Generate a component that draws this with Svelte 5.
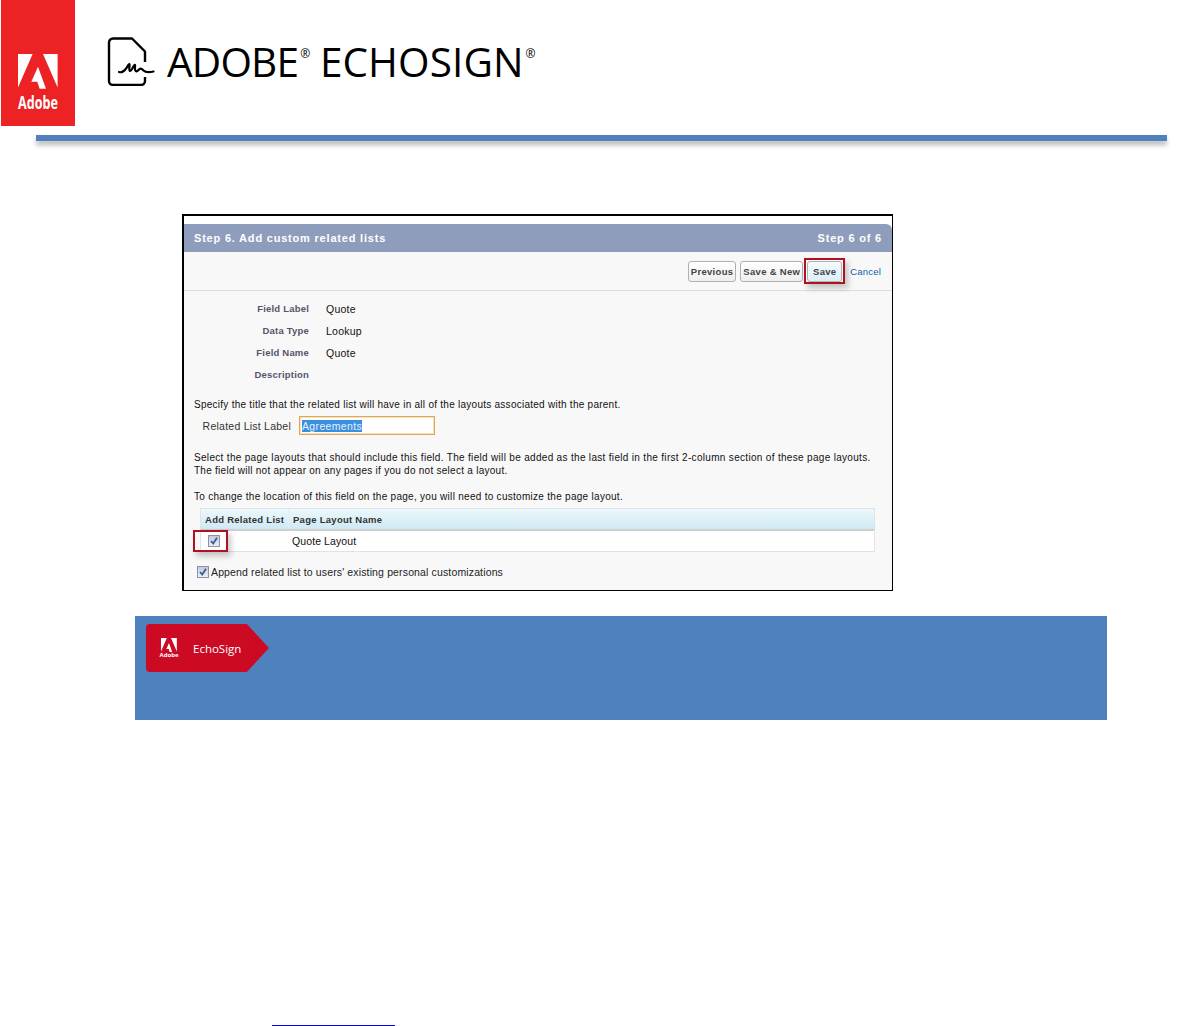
<script>
  const fields = [
    { label: 'Field Label', value: 'Quote' },
    { label: 'Data Type', value: 'Lookup' },
    { label: 'Field Name', value: 'Quote' },
    { label: 'Description', value: '' }
  ];
</script>

<div class="page">
  <header class="header">
    <div class="adobe">
      <svg class="adobe-a" viewBox="0 0 40 35" aria-hidden="true">
        <path d="M0 0H14.600L0 33.500Z M25 0H39.600V33.500Z M20 12.700L28 34.700H21.600L19.300 27.700H13.300Z" fill="#fff" />
      </svg>
      <span class="adobe-word">Adobe</span>
    </div>
    <svg class="doc" viewBox="0 0 48 50" aria-hidden="true">
      <path d="M38 26V15.500L25 2.500H6A4 4 0 0 0 2 6.500V45A4 4 0 0 0 6 49H34A4 4 0 0 0 38 45V41" fill="none" stroke="#000" stroke-width="2.400" stroke-linejoin="round" />
      <path d="M12 36C15 37 17 35.500 19.500 32C21.500 28.500 23 26.500 22.500 30C21.800 35 23 36.500 25 33C27 29 28.500 27 28 31C27.500 35.500 29.500 36.500 31.500 34C33 32 34.500 32 36.500 34.500C38.500 36.500 42 36.500 46.500 35.500" fill="none" stroke="#000" stroke-width="2.200" stroke-linecap="round" />
    </svg>
    <div class="wordmark">ADOBE<span class="reg">®</span> <span class="echo">ECHOSIGN</span><span class="reg">®</span></div>
  </header>

  <div class="rule"></div>

  <section class="shot">
    <div class="title">
      <span>Step 6. Add custom related lists</span>
      <span>Step 6 of 6</span>
    </div>
    <div class="panel">
      <div class="toolbar">
        <button class="btn">Previous</button>
        <button class="btn">Save &amp; New</button>
        <span class="save-wrap">
          <button class="btn save">Save</button>
          <span class="mark mark-save"></span>
        </span>
        <span class="cancel">Cancel</span>
      </div>

      <dl class="fields">
        {#each fields as f}
          <dt>{f.label}</dt>
          <dd>{f.value}</dd>
        {/each}
      </dl>

      <p class="p1">Specify the title that the related list will have in all of the layouts associated with the parent.</p>

      <div class="related">
        <span class="related-label">Related List Label</span>
        <span class="input"><span class="sel">Agreements</span></span>
      </div>

      <p class="p2"><span class="l1">Select the page layouts that should include this field. The field will be added as the last field in the first 2-column section of these page layouts.</span><br /><span class="l2">The field will not appear on any pages if you do not select a layout.</span></p>

      <p class="p3">To change the location of this field on the page, you will need to customize the page layout.</p>

      <div class="table">
        <div class="thead">
          <span class="c1">Add Related List</span>
          <span class="c2">Page Layout Name</span>
        </div>
        <div class="trow">
          <span class="c1 check-cell">
            <span class="check"><svg viewBox="0 0 10 10" aria-hidden="true"><path d="M2 5L4.200 7.500L8 1.800" fill="none" stroke="#3a5a9e" stroke-width="1.800" /></svg></span>
            <span class="mark mark-check"></span>
          </span>
          <span class="c2 rowname">Quote Layout</span>
        </div>
      </div>

      <div class="append">
        <span class="check"><svg viewBox="0 0 10 10" aria-hidden="true"><path d="M2 5L4.200 7.500L8 1.800" fill="none" stroke="#3a5a9e" stroke-width="1.800" /></svg></span>
        <span>Append related list to users' existing personal customizations</span>
      </div>
    </div>
  </section>

  <section class="banner">
    <div class="flag">
      <div class="flag-logo">
        <svg viewBox="0 0 40 35" aria-hidden="true">
          <path d="M0 0H14.600L0 33.500Z M25 0H39.600V33.500Z M20 12.700L28 34.700H21.600L19.300 27.700H13.300Z" fill="#fff" />
        </svg>
        <span>Adobe</span>
      </div>
      <span class="flag-name">EchoSign</span>
    </div>
  </section>

  <div class="footnote"></div>
</div>

<style>
  :global(body) {
    margin: 0;
    background: #fff;
  }
  .page {
    width: 1178px;
    height: 1026px;
    overflow: hidden;
    font-family: "Liberation Sans", Arial, sans-serif;
    position: relative;
  }
  .header {
    height: 126px;
    display: flex;
    align-items: flex-start;
  }
  .adobe {
    width: 74px;
    height: 126px;
    margin-left: 1px;
    background: #ed2224;
    display: flex;
    flex-direction: column;
    align-items: center;
    padding-top: 54px;
    box-sizing: border-box;
  }
  .adobe-a {
    width: 40px;
    height: 35px;
    display: block;
  }
  .adobe-word {
    margin-top: 5px;
    color: #fff;
    font: 700 17px/17px "Open Sans", sans-serif;
    transform: scaleX(0.74);
  }
  .doc {
    width: 48px;
    height: 50px;
    margin: 36px 0 0 32px;
    flex: none;
  }
  .wordmark {
    margin: 34px 0 0 12px;
    font: 400 40.500px/56px "Open Sans", sans-serif;
    color: #000;
    letter-spacing: -0.800px;
    white-space: nowrap;
  }
  .echo {
    letter-spacing: 0.100px;
  }
  .reg {
    font-size: 12px;
    vertical-align: 19px;
    line-height: 0;
    letter-spacing: 0;
    margin: 0 0 0 2px;
  }
  .rule {
    height: 6px;
    margin: 9px 11px 0 36px;
    background: #4f81bd;
    box-shadow: 0 4px 5px rgba(0, 0, 0, 0.28);
  }
  .shot {
    width: 711px;
    height: 377px;
    box-sizing: border-box;
    margin: 73px 0 0 182px;
    border: solid #000;
    border-width: 2px 1px 1px 2px;
    padding-top: 8px;
    background: #fff;
    display: flex;
    flex-direction: column;
  }
  .title {
    height: 28px;
    background: #8f9dbd;
    border-radius: 0 6px 0 0;
    color: #fff;
    font-size: 11px;
    font-weight: 700;
    letter-spacing: 0.800px;
    display: flex;
    align-items: center;
    justify-content: space-between;
    padding: 0 10px;
    flex: none;
  }
  .panel {
    flex: 1;
    background: #f8f8f8;
    font-size: 10px;
    color: #111;
    letter-spacing: 0.350px;
  }
  .toolbar {
    height: 39px;
    box-sizing: border-box;
    border-bottom: 1px solid #dcdcdc;
    display: flex;
    align-items: center;
    justify-content: flex-end;
    padding-right: 11px;
    gap: 4px;
  }
  .btn {
    height: 21px;
    box-sizing: border-box;
    margin: 0;
    padding: 0 2px;
    border: 1px solid #b0b0b0;
    border-radius: 3px;
    background: linear-gradient(#fff, #eee);
    font: 700 9.500px "Liberation Sans", sans-serif;
    letter-spacing: 0.300px;
    color: #444;
    white-space: nowrap;
  }
  .save-wrap {
    position: relative;
    display: flex;
    margin-right: 4px;
  }
  .save {
    width: 35px;
    background: linear-gradient(#f4faff, #dceefa);
  }
  .mark {
    position: absolute;
    border: 2px solid #b01020;
    box-shadow: 3px 4px 6px rgba(0, 0, 0, 0.22);
    box-sizing: border-box;
  }
  .mark-save {
    left: -3px;
    top: -3px;
    width: 41px;
    height: 26px;
  }
  .cancel {
    color: #0a62a8;
    font-size: 9.500px;
    letter-spacing: 0.200px;
  }
  .fields {
    display: grid;
    grid-template-columns: 125px 1fr;
    column-gap: 17px;
    grid-auto-rows: 22px;
    margin: 7px 0 0;
    align-items: center;
  }
  dt {
    text-align: right;
    color: #55556a;
    font-weight: 700;
    font-size: 9.500px;
    letter-spacing: 0.200px;
    padding-bottom: 1px;
  }
  dd {
    margin: 0;
    color: #111;
    font-size: 10.500px;
    letter-spacing: 0.250px;
  }
  p {
    margin: 0;
    white-space: nowrap;
    line-height: 13px;
    padding-left: 10px;
  }
  .p1 {
    margin-top: 12px;
    letter-spacing: 0.260px;
  }
  .related {
    display: flex;
    align-items: center;
    margin-top: 5px;
    height: 19px;
  }
  .related-label {
    width: 107px;
    text-align: right;
    color: #333;
    font-size: 10.500px;
    letter-spacing: 0.240px;
  }
  .input {
    margin-left: 8px;
    width: 136px;
    height: 19px;
    box-sizing: border-box;
    border: 1px solid #e0a850;
    box-shadow: inset 0 0 0 1px rgba(224, 168, 80, 0.35);
    background: #fff;
    padding: 3px 2px 1px;
    line-height: 13px;
    font-size: 10.500px;
  }
  .sel {
    background: #3a8fe0;
    color: #e8f2fb;
  }
  .p2 {
    margin-top: 16px;
  }
  .l1 {
    letter-spacing: 0.317px;
  }
  .l2 {
    letter-spacing: 0.265px;
  }
  .p3 {
    margin-top: 13px;
    letter-spacing: 0.285px;
  }
  .table {
    width: 675px;
    margin: 5px 0 0 16px;
    border: 1px solid #dfe3e6;
    box-sizing: border-box;
  }
  .thead {
    height: 22px;
    box-sizing: border-box;
    display: flex;
    align-items: center;
    background: linear-gradient(#edf8fc, #cfe9f4);
    border-bottom: 2px solid #cfcfcf;
    font-weight: 700;
    font-size: 9.500px;
    color: #333;
    letter-spacing: 0.270px;
  }
  .trow {
    height: 20px;
    display: flex;
    align-items: center;
    background: #fff;
  }
  .c1 {
    width: 88px;
    box-sizing: border-box;
    padding-left: 4px;
    flex: none;
  }
  .thead .c1 {
    height: 100%;
    display: flex;
    align-items: center;
    border-right: 1px solid #e2eef3;
  }
  .thead .c2 {
    padding-left: 4px;
  }
  .rowname {
    padding-left: 3px;
    font-size: 10.500px;
    letter-spacing: 0.100px;
  }
  .check-cell {
    position: relative;
    height: 100%;
    display: flex;
    align-items: center;
    padding-left: 7px;
  }
  .check {
    width: 12px;
    height: 12px;
    box-sizing: border-box;
    border: 1px solid #8a94a8;
    background: linear-gradient(#c5cad6, #eceef3);
    display: inline-flex;
    flex: none;
  }
  .check svg {
    width: 100%;
    height: 100%;
    display: block;
  }
  .mark-check {
    left: -8px;
    top: -1px;
    width: 35px;
    height: 22px;
  }
  .append {
    display: flex;
    align-items: center;
    gap: 2px;
    margin: 14px 0 0 13px;
    font-size: 10.500px;
    color: #222;
    letter-spacing: 0.140px;
  }
  .banner {
    height: 104px;
    box-sizing: border-box;
    margin: 25px 0 0 135px;
    width: 972px;
    background: #4f81bd;
    padding: 8px 0 0 11px;
  }
  .flag {
    width: 123px;
    height: 48px;
    background: #cc0a24;
    border-radius: 4px 0 0 4px;
    clip-path: polygon(0 0, 82% 0, 100% 50%, 82% 100%, 0 100%);
    display: flex;
    align-items: center;
    color: #fff;
  }
  .flag-logo {
    width: 16px;
    margin-left: 15px;
    display: flex;
    flex-direction: column;
    align-items: center;
    font: 700 6px/7px "Open Sans", sans-serif;
  }
  .flag-logo svg {
    width: 16px;
    height: 14px;
    display: block;
  }
  .flag-name {
    margin-left: 16px;
    font: 400 11.500px "Open Sans", sans-serif;
  }
  .footnote {
    position: absolute;
    left: 272px;
    top: 1025px;
    width: 123px;
    height: 1px;
    background: #0000d0;
  }
</style>
